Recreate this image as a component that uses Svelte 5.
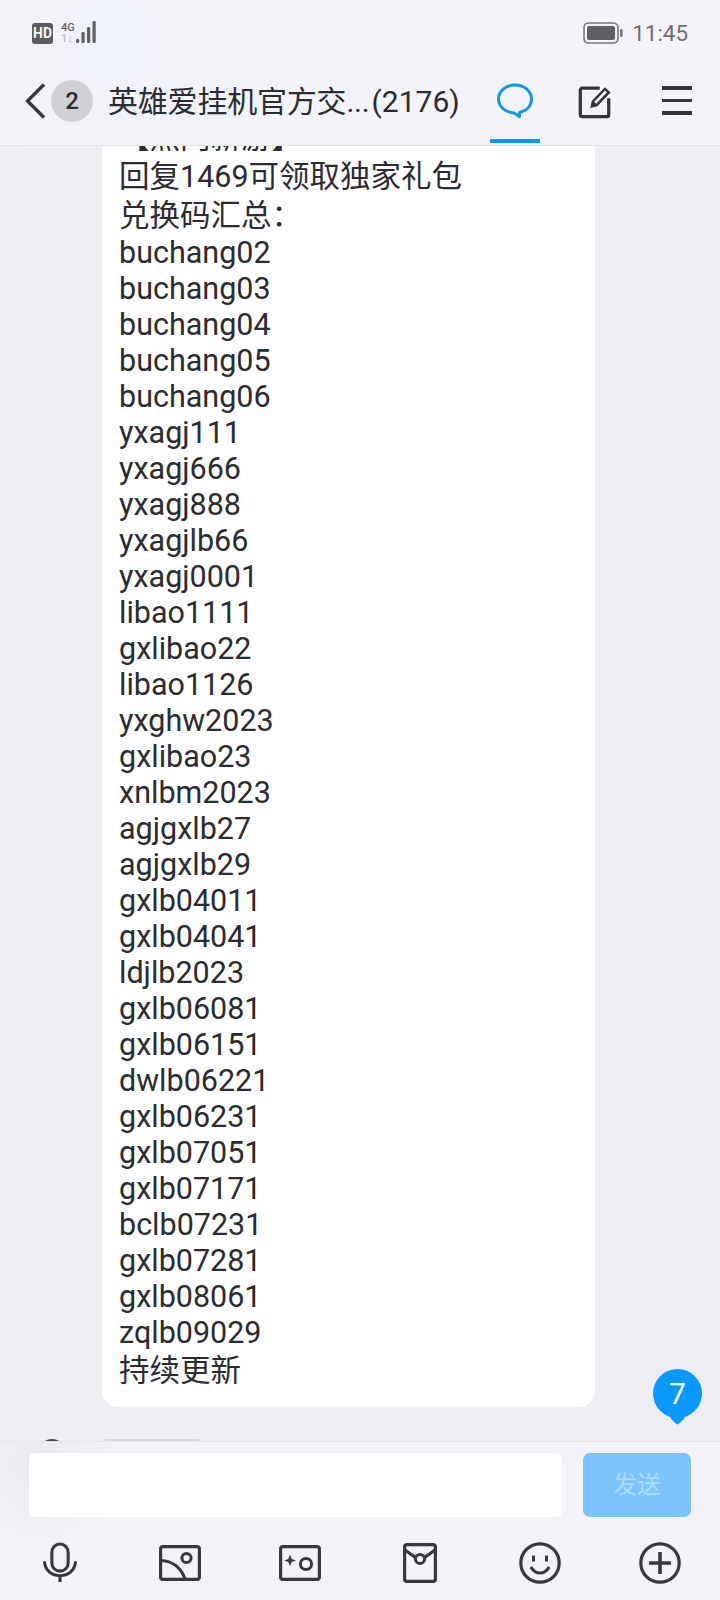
<script>
  const lines = [
    "【热门新游】", "回复1469可领取独家礼包", "兑换码汇总：",
    "buchang02", "buchang03", "buchang04", "buchang05", "buchang06",
    "yxagj111", "yxagj666", "yxagj888", "yxagjlb66", "yxagj0001",
    "libao1111", "gxlibao22", "libao1126", "yxghw2023", "gxlibao23",
    "xnlbm2023", "agjgxlb27", "agjgxlb29", "gxlb04011", "gxlb04041",
    "ldjlb2023", "gxlb06081", "gxlb06151", "dwlb06221", "gxlb06231",
    "gxlb07051", "gxlb07171", "bclb07231", "gxlb07281", "gxlb08061",
    "zqlb09029", "持续更新",
  ];
  const hasCjk = (s) => /[^\x00-\x7f]/.test(s);
</script>

<div class="phone">
  <header class="top">
    <div class="status">
      <div class="status-left">
        <span class="hd">HD</span>
        <svg class="signal" width="38" height="24" viewBox="0 0 38 24">
          <text x="1" y="10" class="net">4G</text>
          <text x="1" y="21" class="net dim">1↓</text>
          <rect x="16" y="18" width="3.2" height="4" rx="1.2" fill="#5f6064" />
          <rect x="21.5" y="11" width="3.2" height="11" rx="1.2" fill="#5f6064" />
          <rect x="27" y="6" width="3.2" height="16" rx="1.2" fill="#5f6064" />
          <rect x="32.5" y="0" width="3.2" height="22" rx="1.2" fill="#5f6064" />
        </svg>
      </div>
      <div class="status-right">
        <svg width="41" height="22" viewBox="0 0 41 22">
          <rect x="1" y="1" width="34" height="20" rx="4.5" fill="none" stroke="#77787c" stroke-width="1.6" />
          <rect x="4" y="4" width="28" height="14" rx="2" fill="#606165" />
          <rect x="37" y="7" width="2.6" height="8" rx="1.2" fill="#77787c" />
        </svg>
        <span class="time">11:45</span>
      </div>
    </div>

    <nav class="nav">
      <svg class="back" width="24" height="38" viewBox="0 0 24 38">
        <path d="M20 2.5 3.5 19 20 35.5" fill="none" stroke="#37383c" stroke-width="3.4" />
      </svg>
      <span class="count">2</span>
      <h1>英雄爱挂机官方交...</h1>
      <span class="members">(2176)</span>
      <div class="tab active">
        <svg width="38" height="38" viewBox="0 0 38 38">
          <path d="M19 3C9.6 3 2.5 9.2 2.5 17c0 7.6 6.8 13.4 15.5 14l5.4 3.6.2-4.2C31 28.8 35.5 23.6 35.5 17 35.5 9.2 28.4 3 19 3Z" fill="none" stroke="#1296ef" stroke-width="3" stroke-linejoin="round" />
        </svg>
      </div>
      <div class="tab">
        <svg width="36" height="36" viewBox="0 0 38 38">
          <path d="M24 5.5H5.5a2 2 0 0 0-2 2v26a2 2 0 0 0 2 2h26a2 2 0 0 0 2-2V16" fill="none" stroke="#333438" stroke-width="3.4" />
          <path d="M14 26.5 15.5 19 29.5 4.5 35.5 10 21.5 24.5Z" fill="#333438" />
          <path d="M18.2 19.8 29.6 8 31.6 10 20.2 22Z" fill="#f3f3f8" />
        </svg>
      </div>
      <div class="menu"><i></i><i></i><i></i></div>
    </nav>
  </header>

  <main class="chat">
    <div class="bubble">
      {#each lines as line}
        <div class:cjk={hasCjk(line)}>{line}</div>
      {/each}
    </div>
    <div class="next">
      <span class="avatar"></span>
      <span class="nick"></span>
    </div>
    <div class="unread">7</div>
  </main>

  <footer class="bottom">
    <div class="composer">
      <div class="input"></div>
      <div class="send">发送</div>
    </div>
    <div class="tools">
      <svg width="38" height="42" viewBox="0 0 42 46">
        <rect x="12" y="2" width="18" height="30" rx="9" fill="none" stroke="#37383c" stroke-width="3.4" />
        <path d="M4 22.5C5 31.5 12 37 21 37s16-5.5 17-14.5" fill="none" stroke="#37383c" stroke-width="3.4" stroke-linecap="round" />
        <path d="M21 37v7" stroke="#37383c" stroke-width="3.4" />
      </svg>
      <svg width="42" height="36" viewBox="0 0 42 36">
        <rect x="1.6" y="1.6" width="38.8" height="32.8" rx="2.5" fill="none" stroke="#37383c" stroke-width="3.2" />
        <circle cx="27.5" cy="13" r="4.6" fill="none" stroke="#37383c" stroke-width="3" />
        <path d="M2 15.5C13 16 22 22.5 26 34" fill="none" stroke="#37383c" stroke-width="3.2" />
      </svg>
      <svg width="42" height="36" viewBox="0 0 42 36">
        <rect x="1.6" y="1.6" width="38.8" height="32.8" rx="2.5" fill="none" stroke="#37383c" stroke-width="3.2" />
        <circle cx="27" cy="19" r="5.6" fill="none" stroke="#37383c" stroke-width="3" />
        <path d="M11 9.5 12.6 14 17 15.5 12.6 17 11 21.5 9.4 17 5 15.5 9.4 14Z" fill="#37383c" />
      </svg>
      <svg width="34" height="40" viewBox="0 0 34 40">
        <rect x="1.6" y="1.6" width="30.8" height="36.8" rx="2.5" fill="none" stroke="#37383c" stroke-width="3.2" />
        <path d="M2 7 12.5 14.5M32 7 21.5 14.5" fill="none" stroke="#37383c" stroke-width="3.2" />
        <circle cx="17" cy="16" r="4.6" fill="none" stroke="#37383c" stroke-width="3" />
      </svg>
      <svg width="42" height="42" viewBox="0 0 42 42">
        <circle cx="21" cy="21" r="19.2" fill="none" stroke="#37383c" stroke-width="3.2" />
        <path d="M14.5 13.5v6M27.5 13.5v6" stroke="#37383c" stroke-width="3" />
        <path d="M12.5 26C15 30 18 31 21 31s6-1 8.5-5" fill="none" stroke="#37383c" stroke-width="3.2" stroke-linecap="round" />
      </svg>
      <svg width="42" height="42" viewBox="0 0 42 42">
        <circle cx="21" cy="21" r="19.2" fill="none" stroke="#37383c" stroke-width="3.2" />
        <path d="M21 10v22M10 21h22" stroke="#37383c" stroke-width="3.6" />
      </svg>
    </div>
  </footer>
</div>

<style>
  :global(body) {
    margin: 0;
    background: #ededf2;
  }

  .phone {
    width: 720px;
    height: 1600px;
    display: flex;
    flex-direction: column;
    overflow: hidden;
    font-family: Roboto, "Noto Sans CJK SC", sans-serif;
    color: #2b2c30;
  }

  .top {
    height: 146px;
    flex: none;
    box-sizing: border-box;
    background: radial-gradient(circle at 110px 40px, #f0f2f9 0, #f3f3f8 230px);
    border-bottom: 1px solid #e4e4e9;
  }

  .status {
    height: 66px;
    display: flex;
    align-items: center;
    justify-content: space-between;
    padding: 0 32px;
  }

  .status-left,
  .status-right {
    display: flex;
    align-items: center;
  }

  .status-left {
    gap: 7px;
  }

  .hd {
    width: 21px;
    height: 21px;
    border-radius: 3px;
    background: #5b5c60;
    color: #f3f3f8;
    font-size: 14px;
    font-weight: 700;
    line-height: 21px;
    text-align: center;
  }

  .net {
    font-family: Roboto, sans-serif;
    font-size: 11px;
    font-weight: 500;
    fill: #5f6064;
  }

  .net.dim {
    fill: #b9babe;
  }

  .status-right {
    gap: 8px;
  }

  .time {
    font-size: 22.4px;
    color: #6d6e72;
  }

  .nav {
    height: 79px;
    box-sizing: border-box;
    display: flex;
    align-items: center;
    padding: 0 0 10px 24px;
  }

  .back {
    flex: none;
  }

  .count {
    width: 42px;
    height: 42px;
    margin-left: 3px;
    border-radius: 50%;
    background: #cfd0d4;
    font-size: 24px;
    font-weight: 500;
    line-height: 42px;
    text-align: center;
  }

  h1 {
    margin: 3px 0 0 15px;
    font-size: 30px;
    font-weight: 400;
    line-height: 40px;
    letter-spacing: -0.2px;
    white-space: nowrap;
  }

  .members {
    margin: 3px 0 0 2px;
    font-size: 30px;
    line-height: 40px;
    white-space: nowrap;
  }

  .tab {
    position: relative;
    width: 50px;
    height: 69px;
    margin-left: 30px;
    display: flex;
    align-items: center;
    justify-content: center;
  }

  .tab.active::after {
    content: "";
    position: absolute;
    left: 0;
    right: 0;
    bottom: -8px;
    height: 4px;
    background: #1296ef;
  }

  .menu {
    width: 30px;
    margin-left: 42px;
    display: flex;
    flex-direction: column;
    gap: 9px;
  }

  .menu i {
    height: 3.4px;
    background: #333438;
  }

  .chat {
    position: relative;
    flex: 1;
    min-height: 0;
    display: flex;
    flex-direction: column;
    justify-content: flex-end;
    overflow: hidden;
    background: #ededf2;
  }

  .bubble {
    flex: none;
    width: 493px;
    box-sizing: border-box;
    margin-left: 102px;
    padding: 0 17px 17px;
    border-radius: 0 0 16px 16px;
    background: #fff;
    font-size: 30.5px;
    line-height: 36px;
  }

  .bubble .cjk {
    line-height: 39px;
  }

  .next {
    flex: none;
    height: 60px;
    margin: 32px 0 -58px;
    padding-left: 38px;
    display: flex;
    gap: 39px;
  }

  .avatar {
    width: 28px;
    height: 28px;
    border-radius: 50%;
    background: #45464a;
  }

  .nick {
    width: 94px;
    height: 2px;
    background: #d3d8e6;
  }

  .unread {
    position: absolute;
    left: 653px;
    top: 1223px;
    width: 49px;
    height: 49px;
    border-radius: 50%;
    background: #0a99ff;
    color: #fff;
    font-size: 30px;
    line-height: 49px;
    text-align: center;
  }

  .unread::after {
    content: "";
    position: absolute;
    left: 19px;
    bottom: -5px;
    width: 11px;
    height: 11px;
    border-radius: 2px;
    background: #0a99ff;
    transform: rotate(45deg);
  }

  .bottom {
    height: 159px;
    flex: none;
    box-sizing: border-box;
    background: radial-gradient(circle at 40px 20px, #e9e9ee 0, #f2f2f7 90px);
    border-top: 1px solid #e4e4e9;
    padding-top: 11px;
  }

  .composer {
    display: flex;
    gap: 21px;
    padding: 0 29px;
  }

  .input {
    width: 533px;
    height: 64px;
    border-radius: 6px;
    background: #fff;
  }

  .send {
    width: 108px;
    height: 64px;
    border-radius: 7px;
    background: #7cc4fb;
    color: #aedafc;
    font-size: 24px;
    line-height: 64px;
    text-align: center;
  }

  .tools {
    height: 92px;
    display: grid;
    grid-template-columns: repeat(6, 1fr);
    align-items: center;
    justify-items: center;
  }
</style>
